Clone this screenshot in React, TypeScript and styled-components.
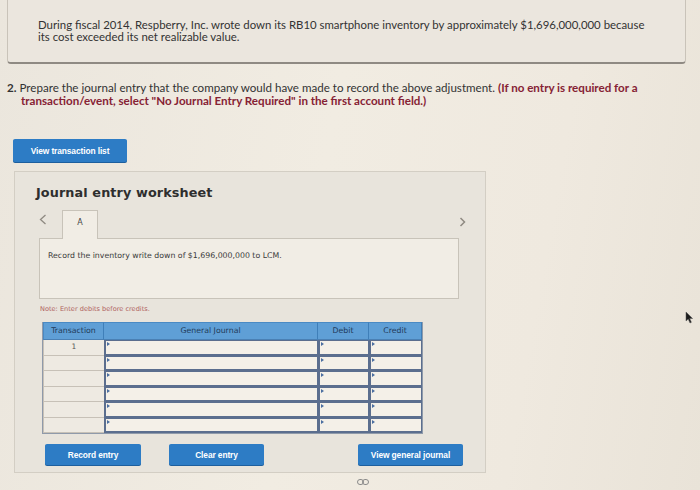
import React from 'react';
import styled, { createGlobalStyle } from 'styled-components';

const GlobalStyle = createGlobalStyle`
  html, body {
    margin: 0;
    padding: 0;
    background: #ede8df;
  }
  body {
    width: 700px;
    height: 490px;
    overflow: hidden;
    background: linear-gradient(100deg, #ebe6dd 0%, #f1ece2 45%, #efe9df 75%, #e9e3d8 100%);
  }
`;

const Page = styled.div`
  position: relative;
  width: 700px;
  height: 490px;
  font-family: Lato, 'Open Sans', sans-serif;
  color: #2f2f2f;
`;

const IntroCard = styled.div`
  margin: 0 14px 0 7px;
  height: 64px;
  box-sizing: border-box;
  padding: 19px 28px 0 30px;
  border: 1px solid #c9c3b9;
  border-top: none;
  border-bottom: 2px solid #8f8a83;
  border-radius: 0 0 4px 4px;
  background: #ebe6de;
  font-size: 11.4px;
  line-height: 12px;
  color: #333;
`;

const Question = styled.p`
  margin: 17px 40px 0 7px;
  padding-left: 14px;
  text-indent: -14px;
  font-size: 11.6px;
  line-height: 13px;
  color: #333;

  b {
    font-weight: 700;
  }
`;

const Alert = styled.span`
  color: #862234;
  font-weight: 700;
`;

const BlueButton = styled.button<{ $w: number }>`
  width: ${(p) => p.$w}px;
  height: 21px;
  padding: 0;
  border: none;
  border-radius: 2px;
  background: #2d7cc5;
  box-shadow: 0 1px 0 #1d5f9e;
  color: #fff;
  font-family: 'Liberation Sans', Arial, sans-serif;
  font-size: 8.4px;
  font-weight: 700;
  letter-spacing: -0.1px;
  text-align: center;
`;

const TopButtonRow = styled.div`
  margin: 32px 0 0 13px;
  display: flex;

  & > button {
    height: 23px;
  }
`;

const Panel = styled.div`
  margin: 9px 0 0 14px;
  width: 472px;
  height: 302px;
  box-sizing: border-box;
  padding: 13px 0 0 21px;
  background: #e8e4dc;
  border: 1px solid #d3cec4;
  font-family: 'DejaVu Sans', Verdana, sans-serif;
`;

const Heading = styled.h2`
  margin: 0;
  font-size: 12.8px;
  font-weight: 700;
  color: #2e2e2e;
  letter-spacing: 0.1px;
`;

const TabRow = styled.div`
  margin-top: 10px;
  display: flex;
  align-items: flex-start;
  height: 29px;
  width: 430px;
`;

const Chevron = styled.svg`
  display: block;
  flex: none;
`;

const PrevSlot = styled.div`
  width: 26px;
  padding: 4px 0 0 3px;
  box-sizing: border-box;
`;

const NextSlot = styled.div`
  margin-left: auto;
  padding-top: 7px;
`;

const Tab = styled.div`
  width: 36px;
  height: 29px;
  box-sizing: border-box;
  border: 1px solid #c8c3b9;
  border-bottom: none;
  background: #f1ede5;
  text-align: center;
  padding-top: 7px;
  font-size: 8px;
  color: #444;
  position: relative;
  z-index: 1;
`;

const ContentBox = styled.div`
  margin: -1px 0 0 3px;
  width: 420px;
  height: 61px;
  box-sizing: border-box;
  border: 1px solid #c8c3b9;
  background: #f1ede5;
  padding: 12px 0 0 8px;
  font-size: 7.8px;
  color: #3a3a3a;
`;

const Note = styled.div`
  margin: 6px 0 0 4px;
  font-size: 6.6px;
  color: #b0625e;
`;

const Table = styled.div`
  margin: 9px 0 0 6px;
  width: 379px;
  display: grid;
  grid-template-columns: 61px 214px 51px 53px;
  grid-template-rows: 18px repeat(6, 15.5px);
  border: 1px solid #8f9aaa;
  border-top: none;
  background: #f0ece4;
`;

const HeadCell = styled.div`
  box-sizing: border-box;
  background: #5f9fd6;
  border-right: 1px solid #3f7fb9;
  border-top: 1px solid #4a8ac4;
  border-bottom: 1px solid #4a80b4;
  color: #223a58;
  font-size: 7.8px;
  line-height: 16px;
  text-align: center;

  &:first-child {
    border-left: 1px solid #4a8ac4;
  }
  &:last-child {
    border-right: 1px solid #4a8ac4;
  }
`;

const TxCell = styled.div`
  box-sizing: border-box;
  border-bottom: 1px solid #c7c1b7;
  border-left: 1px solid #c7c1b7;
  background: #eeeae2;
  font-size: 7.5px;
  color: #555;
  text-align: center;
  line-height: 14px;
`;

const InputCell = styled.div`
  position: relative;
  box-sizing: border-box;
  border: 1px solid #5b6e8e;
  border-width: 1px 1px 2px 2px;
  background: #f4f0e8;

  &::before {
    content: '';
    position: absolute;
    top: 1px;
    left: 1px;
    border-left: 3px solid #4a6da0;
    border-top: 2px solid transparent;
    border-bottom: 2px solid transparent;
  }
`;

const BottomButtons = styled.div`
  margin: 10px 0 0 9px;
  display: flex;
  width: 418px;

  & > :nth-child(2) {
    margin-left: 28px;
  }
  & > :nth-child(3) {
    margin-left: auto;
  }
`;

const Footer = styled.div`
  margin: 6px 0 0 357px;
  display: flex;
  align-items: center;
`;

const Cursor = styled.svg`
  position: absolute;
  left: 685px;
  top: 311px;
`;

const rows = [0, 1, 2, 3, 4, 5];

export default function App() {
  return (
    <Page>
      <GlobalStyle />
      <IntroCard>
        During fiscal 2014, Respberry, Inc. wrote down its RB10 smartphone inventory by approximately $1,696,000,000 because
        its cost exceeded its net realizable value.
      </IntroCard>
      <Question>
        <b>2.</b> Prepare the journal entry that the company would have made to record the above adjustment.{' '}
        <Alert>(If no entry is required for a transaction/event, select "No Journal Entry Required" in the first account field.)</Alert>
      </Question>
      <TopButtonRow>
        <BlueButton $w={114}>View transaction list</BlueButton>
      </TopButtonRow>
      <Panel>
        <Heading>Journal entry worksheet</Heading>
        <TabRow>
          <PrevSlot>
            <Chevron width="8" height="11" viewBox="0 0 8 11">
              <path d="M6.5 1 L1.5 5.5 L6.5 10" fill="none" stroke="#8f8a82" strokeWidth="1.3" />
            </Chevron>
          </PrevSlot>
          <Tab>A</Tab>
          <NextSlot>
            <Chevron width="7" height="10" viewBox="0 0 7 10">
              <path d="M1.5 1 L5.5 5 L1.5 9" fill="none" stroke="#8f8a82" strokeWidth="1.5" />
            </Chevron>
          </NextSlot>
        </TabRow>
        <ContentBox>Record the inventory write down of $1,696,000,000 to LCM.</ContentBox>
        <Note>Note: Enter debits before credits.</Note>
        <Table>
          <HeadCell>Transaction</HeadCell>
          <HeadCell>General Journal</HeadCell>
          <HeadCell>Debit</HeadCell>
          <HeadCell>Credit</HeadCell>
          {rows.map((r) => (
            <React.Fragment key={r}>
              <TxCell>{r === 0 ? '1' : ''}</TxCell>
              <InputCell />
              <InputCell />
              <InputCell />
            </React.Fragment>
          ))}
        </Table>
        <BottomButtons>
          <BlueButton $w={96}>Record entry</BlueButton>
          <BlueButton $w={95}>Clear entry</BlueButton>
          <BlueButton $w={105}>View general journal</BlueButton>
        </BottomButtons>
      </Panel>
      <Footer>
        <svg width="12" height="6" viewBox="0 0 12 6">
          <rect x="0.5" y="0.5" width="6" height="5" rx="2.5" fill="none" stroke="#8a8a8a" strokeWidth="1" />
          <rect x="5.5" y="0.5" width="6" height="5" rx="2.5" fill="none" stroke="#8a8a8a" strokeWidth="1" />
        </svg>
      </Footer>
      <Cursor width="9" height="13" viewBox="0 0 9 13">
        <path d="M1 1 L1 10 L3.2 8 L5 12 L6.4 11.3 L4.7 7.5 L7.6 7.5 Z" fill="#1c1c1c" stroke="#555" strokeWidth="0.5" />
      </Cursor>
    </Page>
  );
}
